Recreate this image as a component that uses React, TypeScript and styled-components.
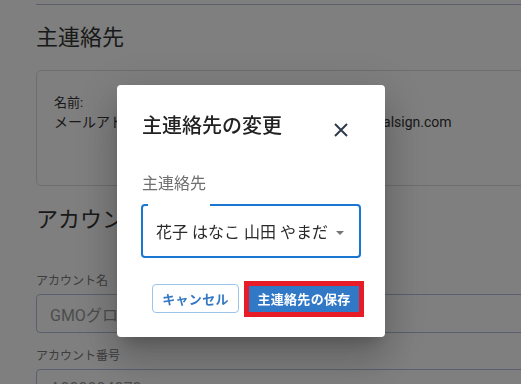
import React from "react";
import styled, { createGlobalStyle } from "styled-components";

const Global = createGlobalStyle`
  html, body { margin: 0; padding: 0; background: #ffffff; overflow: hidden; }
  body { font-family: Roboto, "Noto Sans CJK JP", "Noto Sans", sans-serif; color: #2b2b2b; }
  * { box-sizing: border-box; }
`;

const Page = styled.div`
  width: 640px;
  height: 384px;
  overflow: hidden;
  padding: 4px 0 0 36px;
  display: flex;
  flex-direction: column;
  & > * { flex-shrink: 0; }
`;

const TopRule = styled.div`
  border-top: 1px solid #b4bfd6;
`;

const SectionTitle = styled.h2<{ $top: number }>`
  margin: ${(p) => p.$top}px 0 0;
  font-size: 22px;
  font-weight: 400;
  line-height: 32px;
  color: #333;
`;

const Card = styled.div`
  margin-top: 16px;
  height: 116px;
  border: 1px solid #dcdcdc;
  border-radius: 5px;
  padding: 24px 17px 0;
  display: flex;
  flex-direction: column;
`;

const CardLabel = styled.div`
  font-size: 13px;
  line-height: 16px;
  color: #333;
`;

const CardLine = styled.div`
  margin-top: 1px;
  font-size: 14px;
  line-height: 20px;
  color: #333;
  white-space: nowrap;
`;

const FieldLabel = styled.div<{ $top: number }>`
  margin-top: ${(p) => p.$top}px;
  font-size: 12px;
  line-height: 18px;
  color: #7a7a7a;
`;

const FieldBox = styled.div`
  margin-top: 4px;
  height: 39px;
  border: 1px solid #b3bedb;
  border-radius: 4px;
  padding: 0 13px;
  display: flex;
  align-items: center;
  font-size: 16px;
  color: #9a9a9a;
`;

const Overlay = styled.div`
  position: fixed;
  inset: 0;
  background: rgba(0, 0, 0, 0.5);
`;

const Dialog = styled.div`
  position: fixed;
  left: 117px;
  top: 85px;
  width: 268px;
  height: 252px;
  background: #ffffff;
  border-radius: 4px;
  box-shadow: 0 11px 15px -7px rgba(0,0,0,0.2), 0 24px 38px 3px rgba(0,0,0,0.14), 0 9px 46px 8px rgba(0,0,0,0.12);
  padding: 27px 24px 24px;
  display: flex;
  flex-direction: column;
`;

const Header = styled.div`
  height: 28px;
  display: flex;
  align-items: center;
  justify-content: space-between;
`;

const Title = styled.h3`
  margin: 0 0 0 1px;
  font-size: 20px;
  font-weight: 500;
  line-height: 28px;
  color: #222;
`;

const CloseButton = styled.button`
  width: 24px;
  height: 24px;
  margin-right: 8px;
  margin-top: 8px;
  padding: 0;
  border: none;
  background: transparent;
  display: flex;
  align-items: center;
  justify-content: center;
  color: #2f3a4a;
`;

const SelectLabel = styled.div`
  margin-top: 32px;
  margin-left: 1px;
  font-size: 16px;
  line-height: 24px;
  color: #6f6f6f;
`;

const SelectBox = styled.div`
  position: relative;
  margin-top: 8px;
  height: 54px;
  border: 2px solid #1976d2;
  border-radius: 4px;
  padding: 0 15px 0 13px;
  display: flex;
  align-items: center;
  justify-content: space-between;
  font-size: 16px;
  color: #2a2a2a;
`;

const Notch = styled.span`
  position: absolute;
  left: 5px;
  top: -2px;
  width: 62px;
  height: 2px;
  background: #ffffff;
`;

const Caret = styled.span`
  width: 0;
  height: 0;
  border-left: 4px solid transparent;
  border-right: 4px solid transparent;
  border-top: 4px solid #757575;
  margin-top: 3px;
`;

const Actions = styled.div`
  margin-top: 26px;
  height: 29px;
  display: flex;
  align-items: center;
  justify-content: flex-end;
  gap: 10px;
  padding-right: 2px;
`;

const Button = styled.button<{ $primary?: boolean }>`
  font-family: Roboto, "Noto Sans CJK JP", sans-serif;
  font-size: 13px;
  font-weight: 700;
  letter-spacing: 0.3px;
  cursor: pointer;
  ${(p) =>
    p.$primary
      ? `
    width: 110px;
    height: 26px;
    background: #3178c6;
    color: #ffffff;
    border: none;
    border-radius: 0;
    outline: 5px solid #e81c27;
  `
      : `
    width: 87px;
    height: 29px;
    background: #ffffff;
    color: #3478c4;
    border: 1px solid #9cc3ea;
    border-radius: 4px;
  `}
`;

export default function App() {
  return (
    <>
      <Global />
      <Page>
        <TopRule />
        <SectionTitle $top={17}>主連絡先</SectionTitle>
        <Card>
          <CardLabel>名前:</CardLabel>
          <CardLine>メールアドレス: hanako.yamada@contact.main.globalsign.com</CardLine>
        </Card>
        <SectionTitle $top={18}>アカウント情報</SectionTitle>
        <FieldLabel $top={36}>アカウント名</FieldLabel>
        <FieldBox>GMOグローバルサイン株式会社</FieldBox>
        <FieldLabel $top={14}>アカウント番号</FieldLabel>
        <FieldBox>A000004070</FieldBox>
      </Page>
      <Overlay />
      <Dialog role="dialog">
        <Header>
          <Title>主連絡先の変更</Title>
          <CloseButton aria-label="close">
            <svg width="14" height="14" viewBox="0 0 14 14">
              <path d="M1 1 L13 13 M13 1 L1 13" stroke="currentColor" strokeWidth="2" />
            </svg>
          </CloseButton>
        </Header>
        <SelectLabel>主連絡先</SelectLabel>
        <SelectBox>
          <Notch />
          <span>花子 はなこ 山田 やまだ</span>
          <Caret />
        </SelectBox>
        <Actions>
          <Button>キャンセル</Button>
          <Button $primary>主連絡先の保存</Button>
        </Actions>
      </Dialog>
    </>
  );
}
